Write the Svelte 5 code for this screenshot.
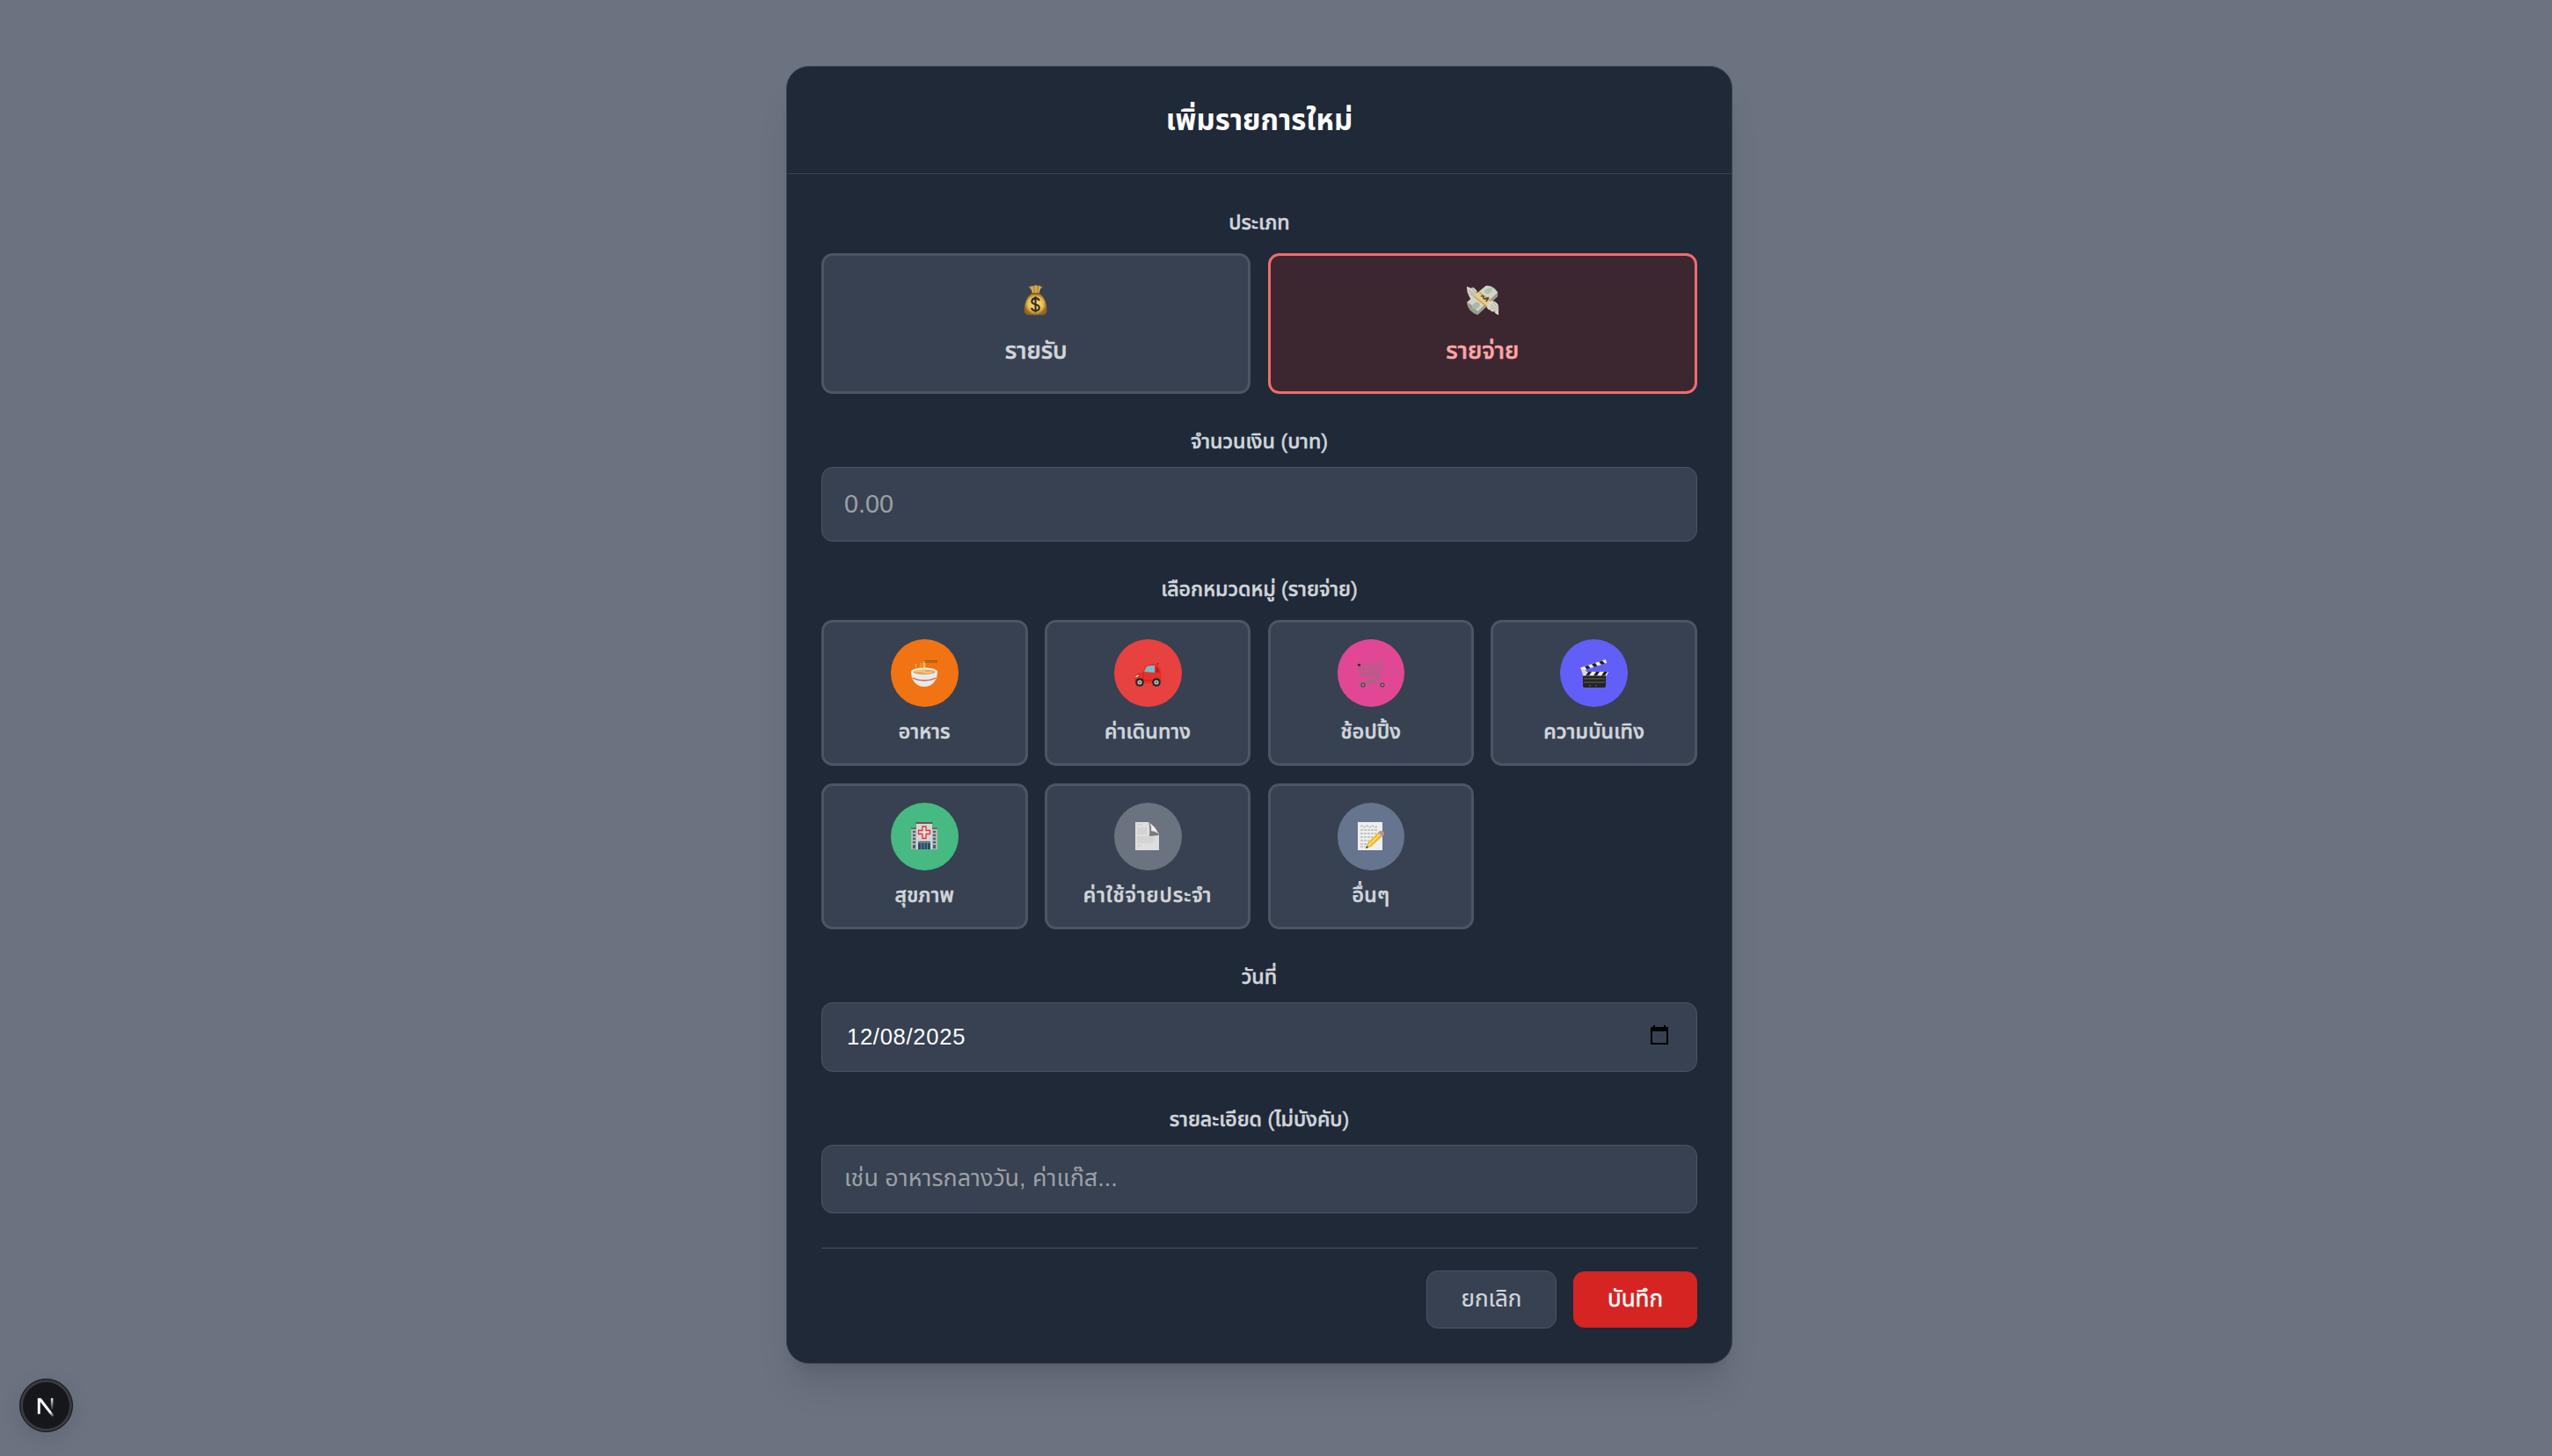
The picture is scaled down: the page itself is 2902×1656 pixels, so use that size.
<script>
  const categories = [
    { name: 'อาหาร', icon: 'food', tone: 'orange' },
    { name: 'ค่าเดินทาง', icon: 'car', tone: 'red' },
    { name: 'ช้อปปิ้ง', icon: 'cart', tone: 'pink' },
    { name: 'ความบันเทิง', icon: 'film', tone: 'indigo' },
    { name: 'สุขภาพ', icon: 'hospital', tone: 'green' },
    { name: 'ค่าใช้จ่ายประจำ', icon: 'page', tone: 'gray', wide: true },
    { name: 'อื่นๆ', icon: 'memo', tone: 'slate' }
  ];
</script>

{#snippet emoji(kind)}
  <svg class="emoji" viewBox="0 0 32 32" aria-hidden="true">
    {#if kind === 'food'}
      <path d="M16 17V2" stroke="#f3c455" stroke-width="2.6" />
      <path d="M15.5 1.5H31M15.5 3.2H31" stroke="#9a5a12" stroke-width="1" />
      <path d="M7 9q-2-2 0-4M11 9q3-2 1-5" stroke="#e8b58a" stroke-width="1" fill="none" />
      <path d="M1 14c0 10 6 17 15 17s15-7 15-17z" fill="#e9e9ea" />
      <path d="M2.5 20.500q13.500 5.500 27 0l-.6 1.600q-12.900 5.200-25.800 0z" fill="#cf5a58" />
      <ellipse cx="16" cy="14" rx="15" ry="4.500" fill="#f7f3ec" />
      <ellipse cx="16" cy="14.400" rx="12.500" ry="3" fill="#dfa76a" />
      <path d="M6 14q5-2 9 0t10 0M16 14V8" stroke="#f5cf74" stroke-width="1.500" fill="none" />
    {:else if kind === 'car'}
      <path d="M1 19c1-3 5-4 9-4.500L14 7c3-2 11-2.500 14-.5 3 3 4 9 4 16l-2 5H3l-2-3z" fill="#e3322a" />
      <path d="M12 14l3-6c2-1 6-1.200 9-1v8z" fill="#7fb9cc" />
      <path d="M25.500 8q3.500 2 4 7h-4z" fill="#b5201c" />
      <path d="M27 6l1-2" stroke="#6e1715" />
      <path d="M2 20l5-3M11 15v9h13" stroke="#b81f1b" stroke-width=".8" fill="none" />
      <path d="M2 19.500l3-2 1 1-3 2z" fill="#f6e9dd" />
      <circle cx="7" cy="26" r="4.800" fill="#252525" /><circle cx="7" cy="26" r="2.600" fill="#bbb" />
      <circle cx="26" cy="26" r="4.800" fill="#252525" /><circle cx="26" cy="26" r="2.600" fill="#bbb" />
      <circle cx="7" cy="26" r="1" fill="#555" /><circle cx="26" cy="26" r="1" fill="#555" />
    {:else if kind === 'cart'}
      <g fill="none" stroke="#92707f" stroke-width=".75">
        <path d="M2 6l2 12 21 1.500L29 3l2-2" stroke-width="1.300" />
        <path d="M2 6l26-2M3 9h24.500M3 12h24M4 15h22M7 6l1 12M12 6l1 12M17 5v14M22 5l-1 14M21 2v3" />
        <path d="M22 20l3 5M18 20l2 4-17 3-1-1M3 27l24-.5" stroke-width="1.400" />
      </g>
      <path d="M1 5h3v2.500H1z" fill="#35262d" />
      <circle cx="7" cy="29" r="2.600" fill="#54474c" /><circle cx="29" cy="29" r="2.600" fill="#54474c" />
      <circle cx="7" cy="29" r="1" fill="#b9abb0" /><circle cx="29" cy="29" r="1" fill="#b9abb0" />
    {:else if kind === 'film'}
      <path d="M0 9.500L29 0l1 4L2 13z" fill="#eee" />
      <path d="M5 8l4-1.300 2.500 3.300-4 1.300zM13 5.400l4-1.300 2.500 3.300-4 1.300zM21 2.700l4-1.300L28 4.700l-4 1.300z" fill="#222" />
      <path d="M3 17h26v13q0 2-2 2H5q-2 0-2-2z" fill="#242424" />
      <path d="M3 14h29l-2 4.500H3z" fill="#f2f2f2" />
      <path d="M9 14h4l-3 4.500H6zM18 14h4l-3 4.500h-4zM27 14h4l-3 4.500h-4z" fill="#222" />
      <path d="M4 22h24M4 26h24M11 29v2M18 29v2" stroke="#777" stroke-width=".8" />
      <path d="M1 11l5 1 2 4-5 2z" fill="#d6d6d8" />
    {:else if kind === 'hospital'}
      <path d="M1 8h30v23H1z" fill="#b9b4b0" /><path d="M1 6.500h30V8H1z" fill="#66605e" />
      <path d="M3 10h3v20H3zM26 10h3v20h-3z" fill="#46627a" />
      <path d="M3 13h3M3 17h3M3 21h3M3 25h3M26 13h3M26 17h3M26 21h3M26 25h3" stroke="#cdc8c4" stroke-width="1.300" />
      <path d="M7 1h18v30H7z" fill="#d9d5d2" /><path d="M6.500 0h19v2h-19z" fill="#605b59" />
      <path d="M14 5h4v4.500h4.500v4H18v5h-4v-5H9.500v-4H14z" fill="#f4dfdc" stroke="#dc3338" stroke-width="1.300" />
      <path d="M9 22h14v9H9z" fill="#274e69" /><path d="M9 22h14v1.500H9zM12.500 24v7M16 24v7M19.500 24v7" fill="#4b4a4a" stroke="#7ea1b5" stroke-width=".7" />
    {:else if kind === 'page'}
      <path d="M2 0h15l12 13v19H2z" fill="#dedede" />
      <path d="M17 0q2 5 1 16l11-1Q27 5 17 0z" fill="#77797a" /><path d="M18 1q7 4 10 12-4-3-8-3 1-5-2-9z" fill="#efefef" />
      <path d="M4 3h6M4 7h11M4 9h11M4 11h11M4 13h11M4 17h20M4 19h20M4 21h20M4 23h18M4 27h5" stroke="#c4c4c4" stroke-width=".8" />
    {:else}
      <path d="M1 0h28v32H1z" fill="#eee" />
      <path d="M4 5q2-2 3 0t3 0 3 0 3 0 3 0 4 0M4 9h20M4 13h18M4 17h14M4 21h10M4 25h7M4 28h5" fill="none" stroke="#9a9c9f" stroke-width="1" stroke-dasharray="3 1" />
      <path d="M10 30l2-6 13-13 5 4-14 13z" fill="#eab32e" /><path d="M13 27l14-14" stroke="#ffdd62" stroke-width="2" />
      <path d="M24 12l2-2 5 4-2 2z" fill="#8da3b2" /><path d="M26 10q3-1 5 2v2l-1 1z" fill="#e38182" /><path d="M10 30l1-3 2 2z" fill="#333" />
    {/if}
  </svg>
{/snippet}

<main>
  <section class="modal">
    <header><h1>เพิ่มรายการใหม่</h1></header>
    <form>
      <span class="label type-label">ประเภท</span>
      <div class="types">
        <button type="button" class="type">
          <svg class="type-icon" viewBox="0 0 40 40" aria-hidden="true">
            <defs><radialGradient id="bag"><stop stop-color="#f8df83" /><stop offset=".65" stop-color="#e5c158" /><stop offset="1" stop-color="#93651e" /></radialGradient></defs>
            <path d="M16 12q-1-5-5-9 3 0 4-1 2 1 4-1l3 1q3-1 3 1h3q-4 4-5 9z" fill="#be8b3c" />
            <path d="M15 3l2 8M20 2v9M25 3l-2 8" stroke="#edca7c" />
            <path d="M15 11h9c6 4 9 12 9 19q1 7-5 7H12q-7 0-6-7 1-13 9-19z" fill="url(#bag)" />
            <path d="M15 11.500h9" stroke="#8d5e21" stroke-width="2" />
            <path d="M24 20q-1-3-4.500-3T15 20.500q0 3 4.500 4t4.500 4q0 3.500-4.500 3.500T15 28.500M19.500 15v19" fill="none" stroke="#332b23" stroke-width="2.200" />
          </svg>
          <span>รายรับ</span>
        </button>
        <button type="button" class="type active">
          <svg class="type-icon" viewBox="0 0 40 40" aria-hidden="true">
            <path d="M1 3l5 2 3-1 4 4 1 9-3 3q-6-1-7-5Q1 10 1 3z" fill="#d5d3c4" />
            <path d="M3 7l9 7M4 11l8 5M7 5l6 7" stroke="#9e9e91" />
            <path d="M12 12L24 2q9-1 14 8v5L14 37Q3 34 1 23z" fill="#999d91" />
            <path d="M12 12L24 2q8 0 14 8L14 33Q7 23 1 22z" fill="#d2d5c6" />
            <ellipse cx="27" cy="8" rx="5" ry="3" fill="#afc1a7" transform="rotate(-25 27 8)" />
            <ellipse cx="12" cy="26" rx="5" ry="3.500" fill="#afb6a7" transform="rotate(-35 12 26)" />
            <path d="M10 15l6-5 15 11-6 6z" fill="#e4cd8d" /><path d="M10 15l15 12M16 10l15 11" stroke="#d89e25" stroke-width="1.400" />
            <path d="M18 15q3-2 3 1t4 1-1 4" fill="none" stroke="#504b34" stroke-width="1.800" />
            <path d="M25 28q0-5 6-8 7 1 8 7v10q-4-1-5-4-4 1-5-2-3 0-4-3z" fill="#dad8ca" />
            <path d="M30 24l8 8M29 27l7 6M33 22l5 7" stroke="#a3a294" />
          </svg>
          <span>รายจ่าย</span>
        </button>
      </div>

      <label class="label amount-label" for="amount">จำนวนเงิน (บาท)</label>
      <input id="amount" class="amount" placeholder="0.00" />

      <span class="label cat-label">เลือกหมวดหมู่ (รายจ่าย)</span>
      <div class="categories">
        {#each categories as c}
          <button type="button" class="category">
            <i class={c.tone}>{@render emoji(c.icon)}</i>
            <span class:wide={c.wide}>{c.name}</span>
          </button>
        {/each}
      </div>

      <span class="label date-label">วันที่</span>
      <div class="date">
        <span>12/08/2025</span>
        <svg viewBox="0 0 20 22" aria-hidden="true"><path d="M0 2h3V0h2v2h10V0h2v2h3v20H0zM2 7v13h16V7z" fill="#000" fill-rule="evenodd" /></svg>
      </div>

      <label class="label detail-label" for="detail">รายละเอียด (ไม่บังคับ)</label>
      <input id="detail" class="detail" placeholder="เช่น อาหารกลางวัน, ค่าแก๊ส..." />

      <footer>
        <button type="button" class="cancel">ยกเลิก</button>
        <button type="button" class="save">บันทึก</button>
      </footer>
    </form>
  </section>

  <div class="dev-badge">
    <svg viewBox="0 0 61 61" aria-hidden="true">
      <defs>
        <linearGradient id="diag" x1="30" y1="30" x2="41" y2="43" gradientUnits="userSpaceOnUse"><stop stop-color="#fff" /><stop offset=".55" stop-color="#fff" /><stop offset="1" stop-color="#fff" stop-opacity="0" /></linearGradient>
        <linearGradient id="stem" x1="0" y1="21" x2="0" y2="36" gradientUnits="userSpaceOnUse"><stop stop-color="#fff" /><stop offset="1" stop-color="#fff" stop-opacity="0" /></linearGradient>
      </defs>
      <path d="M20.500 22h4L40 42.500l-2.200 1.700L23.500 26v14.500h-3z" fill="url(#diag)" />
      <path d="M36 22h2.700v15H36z" fill="url(#stem)" />
    </svg>
  </div>
</main>

<style>
  :global(body) { margin: 0; background: #6b7280; }
  main {
    position: relative;
    box-sizing: border-box;
    width: 2902px;
    height: 1656px;
    padding: 75px 0 0 894px;
    overflow: hidden;
    background: #6b7280;
    font-family: "Liberation Sans", "Noto Sans Thai", "Thonburi", sans-serif;
    color: #d1d5dc;
  }
  .modal {
    box-sizing: border-box;
    width: 1076px;
    height: 1476px;
    border: 1px solid #364153;
    border-radius: 25.6px;
    background: #1f2937;
    box-shadow: 0 32px 40px -8px rgb(0 0 0 / .1), 0 13px 16px -10px rgb(0 0 0 / .1);
  }
  header {
    box-sizing: border-box;
    height: 122px;
    border-bottom: 1px solid #374151;
    display: grid;
    place-items: center;
  }
  h1 { margin: 0; color: #fff; font-size: 32.9px; line-height: 45px; font-weight: 700; }
  form { padding: 0 39px; display: flex; flex-direction: column; }
  button, input { box-sizing: border-box; font-family: inherit; margin: 0; }
  .label { text-align: center; font-size: 23.2px; line-height: 32px; font-weight: 500; -webkit-text-stroke: .5px currentColor; }
  .type-label { margin: 39px 0 19px; }
  .types { display: grid; grid-template-columns: 1fr 1fr; gap: 19.2px; }
  .type, .category {
    border: 3px solid #4b5563;
    border-radius: 12.8px;
    background: #374151;
    color: #d1d5dc;
    display: flex;
    flex-direction: column;
    align-items: center;
  }
  .type { height: 160px; padding: 32px 0 0; font-size: 27px; line-height: 38px; font-weight: 500; }
  .type span, .category span { -webkit-text-stroke: .6px currentColor; }
  .type.active { border-color: #f26b6b; background: #3c2730; color: #fca5a5; }
  .type-icon { width: 38px; height: 38px; margin-bottom: 19px; }
  .amount-label { margin: 38px 0 13px; }
  input, .date {
    width: 100%;
    border: 1px solid #4b5563;
    border-radius: 12.8px;
    background: #374151;
    color: #fff;
    padding: 0 25px;
  }
  input::placeholder { color: #9ca0a7; opacity: 1; }
  .amount { height: 85px; font-size: 28.8px; }
  .cat-label { margin: 38px 0 19px; }
  .categories { display: grid; grid-template-columns: repeat(4, 1fr); gap: 19.2px; }
  .category { height: 166.4px; padding: 19.2px 0 0; font-size: 23.2px; line-height: 32px; font-weight: 500; letter-spacing: .2px; }
  .category .wide { letter-spacing: 1px; }
  .category i { width: 76.8px; height: 76.8px; border-radius: 50%; margin-bottom: 12px; display: grid; place-items: center; }
  .emoji { width: 32px; height: 32px; display: block; }
  .orange { background: #f27313; }
  .red { background: #e7423f; }
  .pink { background: #e24796; }
  .indigo { background: #625ff8; }
  .green { background: #46ba82; }
  .gray { background: #6b7280; }
  .slate { background: #66748e; }
  .date-label { margin: 38px 0 13px; }
  .date { box-sizing: border-box; height: 79px; padding: 0 32px 0 28px; display: flex; align-items: center; justify-content: space-between; font-size: 25.6px; letter-spacing: .7px; }
  .date svg { width: 20px; height: 22px; margin-bottom: 4px; }
  .detail-label { margin: 38px 0 13px; }
  .detail { height: 78px; font-size: 26.9px; }
  footer { margin-top: 39px; border-top: 1px solid #4b5563; padding-top: 25px; display: flex; justify-content: flex-end; align-items: center; gap: 19px; }
  footer button { border-radius: 12.8px; padding: 0; font-size: 26px; }
  .cancel { width: 148px; height: 66px; border: 1px solid #4b5563; background: #374151; color: #d1d5dc; -webkit-text-stroke: .2px currentColor; }
  .save { width: 141px; height: 64px; border: 0; background: #d62422; color: #fff; -webkit-text-stroke: .4px currentColor; }
  .dev-badge {
    position: absolute;
    left: 22px;
    top: 1568px;
    box-sizing: border-box;
    width: 61px;
    height: 61px;
    border-radius: 50%;
    background: #16171b;
    border: 1px solid #17181b;
    box-shadow: inset 0 0 0 3px #3a3b3d, 0 6px 24px rgb(0 0 0 / .1);
  }
  .dev-badge svg { display: block; width: 59px; height: 59px; }
</style>
